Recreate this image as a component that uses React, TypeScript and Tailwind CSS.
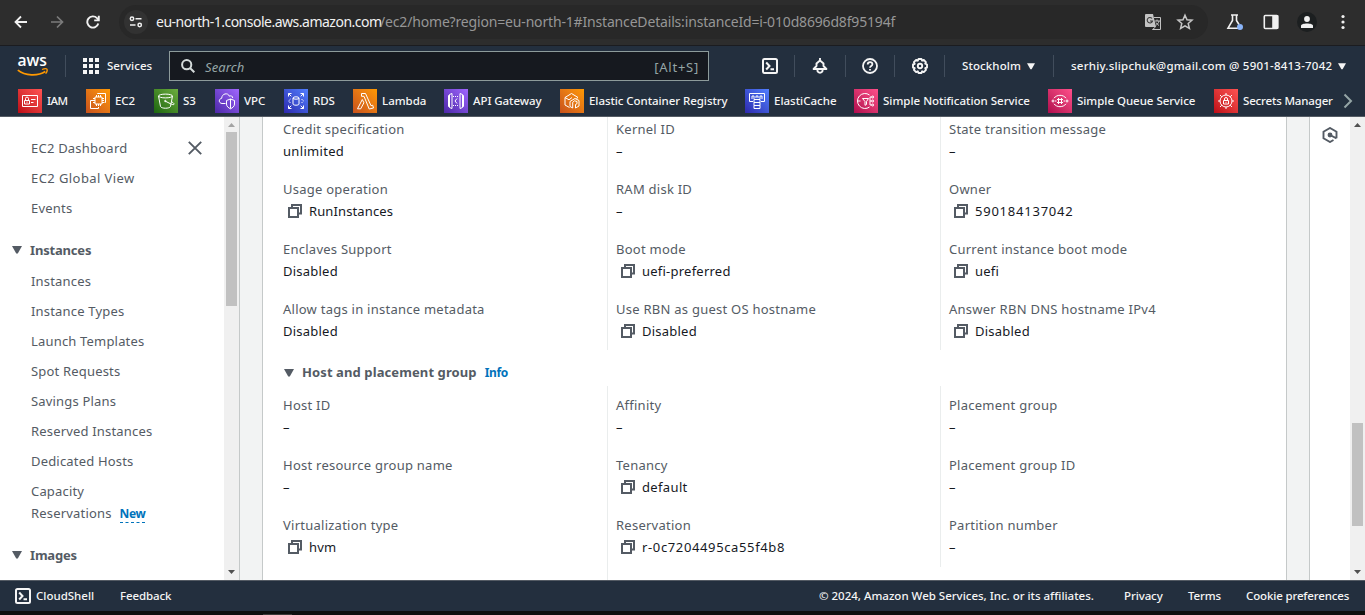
import React from "react";

type IconProps = { children: React.ReactNode; className?: string };

function Glyph({ children, className = "" }: IconProps) {
  return (
    <svg viewBox="0 0 24 24" className={`size-6 shrink-0 text-white ${className}`} fill="none" stroke="currentColor" strokeWidth="1">
      {children}
    </svg>
  );
}

const RED = "bg-linear-to-tr from-[#bd0816] to-[#ff5252]";
const ORANGE = "bg-linear-to-tr from-[#c8511b] to-[#ff9900]";
const GREEN = "bg-linear-to-tr from-[#1b660f] to-[#6cae3e]";
const PURPLE = "bg-linear-to-tr from-[#4d27a8] to-[#a166ff]";
const BLUE = "bg-linear-to-tr from-[#2e27ad] to-[#527fff]";
const PINK = "bg-linear-to-tr from-[#b0084d] to-[#ff4f8b]";

const favorites: { name: string; width: string; tint: string; track: string; art: React.ReactNode }[] = [
  {
    name: "IAM", width: "w-[68px]", tint: RED, track: "tracking-[-0.5px]",
    art: (
      <>
        <path d="M4.500 6.500h15v11h-15z" />
        <path d="M6.500 11.500h5v3.500h-5zM7.500 11.500V9.600a1.500 1.500 0 0 1 3 0v1.900M13 10.500h4.500M13 13.500h2.500" />
        <path d="M9 12.500v1.200" />
      </>
    ),
  },
  {
    name: "EC2", width: "w-[68px]", tint: ORANGE, track: "tracking-[-0.05px]",
    art: (
      <>
        <path d="M9 8h7v7H9z" />
        <path d="M10.500 8V6M12.500 8V6M14.500 8V6M10.500 17v-2M12.500 17v-2M14.500 17v-2M9 9.500H7M9 11.500H7M9 13.500H7M18 9.500h-2M18 11.500h-2M18 13.500h-2" />
        <path d="M11.500 5V4.500h8v9h-1M7 11.500H4.500v8h8V18" />
      </>
    ),
  },
  {
    name: "S3", width: "w-[61px]", tint: GREEN, track: "tracking-normal",
    art: (
      <>
        <ellipse cx="11.500" cy="7" rx="7" ry="1.900" />
        <path d="M4.500 7l2 10.500c1 2.300 9 2.300 10 0l2-10.500M11 12l6 3c1.500.700 3.500 1 3-.3-.4-.9-1.600-1.500-2.500-2" />
        <circle cx="11.300" cy="12" r=".7" />
      </>
    ),
  },
  {
    name: "VPC", width: "w-[69px]", tint: PURPLE, track: "tracking-normal",
    art: (
      <>
        <path d="M10.500 14.500H7c-3.600-.4-3.500-4.700-.3-5.200C6.700 4.500 13 3.200 14.400 7.200c1.800-.8 3.200-.2 3.300 1.800" />
        <path d="M15.500 10l4 1.500v3.500c0 2.500-2 3.800-4 4.800-2-1-4-2.300-4-4.800v-3.500zM15.500 10v9.500" />
      </>
    ),
  },
  {
    name: "RDS", width: "w-[69px]", tint: BLUE, track: "tracking-[-0.1px]",
    art: (
      <>
        <ellipse cx="12" cy="9" rx="3" ry="1.200" />
        <path d="M9 9v6c0 1.600 6 1.600 6 0V9" />
        <path d="M4.500 7.500v-3h3M4.500 4.500L7.300 7.300M16.500 4.500h3v3M19.500 4.500l-2.800 2.800M4.500 16.500v3h3M4.500 19.500l2.800-2.800M16.500 19.500h3v-3M19.500 19.500l-2.800-2.800" />
        <path d="M6.500 10l-2 2 2 2M17.500 10l2 2-2 2" strokeDasharray="1.500 .7" />
      </>
    ),
  },
  {
    name: "Lambda", width: "w-[91px]", tint: ORANGE, track: "tracking-normal",
    art: <path d="M8.500 4.500h4l5.500 12.200 1.700-.5.800 2.800-4.300 1L11 7.300H8.500zM9.300 10.500l1.600 3.300-3.200 6H4.500z" />,
  },
  {
    name: "API Gateway", width: "w-[116px]", tint: PURPLE, track: "tracking-[-0.08px]",
    art: (
      <>
        <path d="M8 4.500v15l-2.500-1V5.500zM16 4.500v15l2.500-1V5.500zM5.500 6.500h-1v11h1M18.500 6.500h1v11h-1" />
        <path d="M13 9.500L11 12l2 2.500" />
        <path d="M9 7.500h6M9 16.500h6" strokeDasharray="1 1" />
      </>
    ),
  },
  {
    name: "Elastic Container Registry", width: "w-[185px]", tint: ORANGE, track: "tracking-[-0.06px]",
    art: (
      <>
        <path d="M9.500 18.500L5 16V8.500l6.500-4 6.500 4-1.500 1" />
        <path d="M5 8.500l4 2.300 3-2.300" />
        <path d="M10 12.500l5-3 4 2v5.500l-3.500 2v-3.500l1.500-.8v-2.200l-2.500-.7-1.800 1.500V19l-2.700-1.500z" />
      </>
    ),
  },
  {
    name: "ElastiCache", width: "w-[109px]", tint: BLUE, track: "tracking-normal",
    art: (
      <>
        <path d="M8 12.500H4.500v-8h15v8H16M7 10V7h2v3M11 9V7h2v2M15 10V7h2v3" />
        <path d="M9 10.500h6v3H9zM9 13.500h6v3H9zM9 16.500h6v3H9z" />
      </>
    ),
  },
  {
    name: "Simple Notification Service", width: "w-[194px]", tint: PINK, track: "tracking-normal",
    art: (
      <>
        <path d="M15.500 6a7.500 7.500 0 1 0 0 12M4 12h2.500M8.500 9.500h6L12.500 12.500v3l-1.500.800v-3.800z" />
        <path d="M16 12h2M16 8v8M16 8h2M16 16h2" />
        <circle cx="18.700" cy="8" r="1" /><circle cx="18.700" cy="12" r="1" /><circle cx="18.700" cy="16" r="1" />
      </>
    ),
  },
  {
    name: "Simple Queue Service", width: "w-[166px]", tint: PINK, track: "tracking-[-0.03px]",
    art: (
      <>
        <path d="M6 9.200a7 6 0 0 1 12 0M6 14.800a7 6 0 0 0 12 0" />
        <path d="M10.500 9v6M13.500 9v6M9 10.500h6M9 13.500h6" />
        <circle cx="5" cy="12" r="1" /><circle cx="19" cy="12" r="1" />
        <path d="M7 12h1.500M15.500 12H17" />
      </>
    ),
  },
  {
    name: "Secrets Manager", width: "w-[126px]", tint: RED, track: "tracking-[-0.17px]",
    art: (
      <>
        <circle cx="12" cy="12" r="6" />
        <path d="M9.500 11.500h5v3.500h-5zM10.500 11.500V10a1.500 1.500 0 0 1 3 0v1.500M12 12.800v1" />
        <path d="M12 6V4M12 20v-2M6 12H4M20 12h-2M7.800 7.800L6 6M16.200 7.800L18 6M7.800 16.200L6 18M16.200 16.200L18 18" />
      </>
    ),
  },
];

function Caret({ className = "" }: { className?: string }) {
  return (
    <svg viewBox="0 0 10 8" className={`shrink-0 ${className}`} fill="currentColor">
      <path d="M0 0h10L5.800 7.500H4.200z" />
    </svg>
  );
}

function ShellIcon() {
  return (
    <svg viewBox="0 0 16 16" className="size-4 shrink-0" fill="none" stroke="currentColor" strokeWidth="2">
      <rect x="1" y="1" width="14" height="14" rx="1.500" />
      <path d="M4.200 4.500L7.500 8l-3.300 3.500M8.500 11.200h3.500" />
    </svg>
  );
}

function CopyIcon() {
  return (
    <svg viewBox="0 0 16 16" className="size-4 shrink-0 text-[#545b64]" fill="none" stroke="currentColor" strokeWidth="2">
      <path d="M2 5h9v9H2z" />
      <path d="M5 5V2h9v8.500h-3" />
    </svg>
  );
}

function ScrollArrow({ up = false, className = "" }: { up?: boolean; className?: string }) {
  return (
    <svg viewBox="0 0 7 4" className={`h-1 w-[7px] ${className}`} fill="currentColor">
      <path d={up ? "M3.500 0L7 4H0z" : "M0 0h7L3.500 4z"} />
    </svg>
  );
}

function BrowserBar() {
  return (
    <header className="flex h-[46px] shrink-0 items-center border-b border-[#1b1c20] bg-[#2d2d2d] pb-px text-[#f1f1f1]">
      <svg viewBox="0 0 14 14" className="ml-[14px] size-[14px]" fill="none" stroke="currentColor" strokeWidth="1.800">
        <path d="M13 7H2M7 1.500L1.500 7 7 12.500" />
      </svg>
      <svg viewBox="0 0 14 14" className="ml-[22px] size-[14px] text-[#7b7b7b]" fill="none" stroke="currentColor" strokeWidth="1.700">
        <path d="M1 7h11M7 1.500L12.500 7 7 12.500" />
      </svg>
      <svg viewBox="0 0 14 14" className="ml-[22px] size-[14px]" fill="none" stroke="currentColor" strokeWidth="1.900">
        <path d="M12.300 8.500A5.600 5.600 0 1 1 11 3.200l1.500 1.600" />
        <path d="M12.800.8v4.600H8.200" />
      </svg>
      <div className="ml-[19px] flex h-[34px] w-[1089px] items-center rounded-full bg-[#282828] pl-[5px]">
        <span className="flex size-6 items-center justify-center rounded-full bg-[#323232]">
          <svg viewBox="0 0 14 12" className="h-3 w-[14px]" fill="none" stroke="currentColor" strokeWidth="1.500">
            <circle cx="3" cy="2.800" r="1.700" /><path d="M6.500 2.800H12.500M1 9h5.500" /><circle cx="10.700" cy="9" r="1.700" />
          </svg>
        </span>
        <span className="ml-2 w-[224px] whitespace-nowrap text-[14px] leading-5 tracking-[-0.5px]">eu-north-1.console.aws.amazon.com</span>
        <span className="whitespace-nowrap text-[14px] leading-5 tracking-[-0.17px] text-[#969696]">/ec2/home?region=eu-north-1#InstanceDetails:instanceId=i-010d8696d8f95194f</span>
        <svg viewBox="0 0 18 18" className="ml-auto size-[18px] shrink-0" fill="none">
          <path d="M2 1h7l3 13H2a1 1 0 0 1-1-1V2a1 1 0 0 1 1-1z" fill="#c3c3c3" />
          <path d="M10 4.500h6.500v12H8.500l3-2.500" stroke="#c3c3c3" />
          <path d="M8 5.500A2.700 2.700 0 1 0 8.500 8H6" stroke="#383838" strokeWidth="1.100" />
          <path d="M10.500 8H16M13 6.500V8M15 8c-.5 2.500-2 3.500-3.300 4.500M12 9.500c.6 1.300 2 2.400 3 3" stroke="#c3c3c3" />
        </svg>
        <svg viewBox="0 0 18 18" className="ml-[14px] mr-[14px] size-[18px] shrink-0 text-[#c7c7c7]" fill="none" stroke="currentColor" strokeWidth="1.500">
          <path d="M9 2.200l2 4.600 5 .4-3.800 3.300 1.200 4.900L9 12.800l-4.400 2.600 1.200-4.900L2 7.200l5-.4z" />
        </svg>
      </div>
      <svg viewBox="0 0 18 18" className="ml-[18px] size-[18px]" fill="none" stroke="currentColor" strokeWidth="1.600">
        <path d="M5 2h7M6.500 2v5.500L2 15.200h10M10.500 2v5.500l2.500 4" />
        <circle cx="14" cy="14" r="3" fill="#8ab4f8" stroke="none" />
      </svg>
      <svg viewBox="0 0 16 16" className="ml-[19px] size-4" fill="none" stroke="currentColor" strokeWidth="1.600">
        <rect x="1.300" y="1.500" width="13.400" height="13" rx="1" /><path d="M10 2h4.500v12H10z" fill="currentColor" />
      </svg>
      <span className="ml-[18px] flex size-5 items-center justify-center rounded-full bg-[#1c1f20]">
        <svg viewBox="0 0 12 12" className="size-3" fill="currentColor"><circle cx="6" cy="3" r="2.900" /><path d="M0 12V9.800C0 6.700 12 6.700 12 9.800V12z" /></svg>
      </span>
      <svg viewBox="0 0 4 16" className="ml-6 h-4 w-1" fill="currentColor"><circle cx="2" cy="2.500" r="1.600" /><circle cx="2" cy="8" r="1.600" /><circle cx="2" cy="13.500" r="1.600" /></svg>
    </header>
  );
}

function Divider({ className = "" }: { className?: string }) {
  return <i className={`h-[22px] w-px shrink-0 bg-[#414d5c] ${className}`} />;
}

function TopNav() {
  return (
    <div className="flex h-10 shrink-0 items-center text-[11.500px] font-medium text-[#f5f5f5]">
      <svg viewBox="0 -8 32 36" className="ml-[17px] h-9 w-8 shrink-0">
        <text x=".5" y="10" textLength="29.500" lengthAdjust="spacingAndGlyphs" fill="#fff" fontSize="15.500" fontWeight="600" fontFamily="Open Sans, sans-serif">aws</text>
        <path d="M.8 14.200C8 20 21 20.300 28.300 15.500" fill="none" stroke="#f90" strokeWidth="1.700" />
        <path d="M25 13.500c2-.8 4.500-.9 5-.3.400.7-.1 2.800-1.400 4.500" fill="none" stroke="#f90" strokeWidth="1.300" />
      </svg>
      <Divider className="ml-4" />
      <svg viewBox="0 0 16 16" className="ml-[17px] size-4 shrink-0" fill="currentColor">
        {[0, 6, 12].map((y) => [0, 6, 12].map((x) => <rect key={`${x}-${y}`} x={x} y={y} width="4" height="4" />))}
      </svg>
      <span className="ml-2 w-[62px] tracking-[0.05px]">Services</span>
      <div className="flex h-[30px] w-[540px] shrink-0 items-center border border-[#8d9b9b] bg-[#16191f] pl-[11px] pr-[9px] font-normal text-[#95a5a6]">
        <svg viewBox="0 0 14 14" className="size-[14px]" fill="none" stroke="#d5dbdb" strokeWidth="2">
          <circle cx="5.700" cy="5.700" r="4.600" /><path d="M9 9l4.300 4.300" />
        </svg>
        <span className="ml-[10px] pt-[3px] text-[13px] italic tracking-[0.1px]">Search</span>
        <span className="ml-auto pt-[3px] text-[13px] tracking-[0.75px]">[Alt+S]</span>
      </div>
      <span className="ml-[53px]"><ShellIcon /></span>
      <Divider className="ml-4" />
      <svg viewBox="0 0 16 16" className="ml-[17px] size-4 shrink-0" fill="none" stroke="currentColor" strokeWidth="1.900">
        <path d="M8 0V2M8 2.500L4.500 5.500V8L1.600 11h12.800L11.500 8V5.500zM5.500 12v1.200c.8 2 4.200 2 5 0V12" strokeLinejoin="round" />
      </svg>
      <Divider className="ml-[17px]" />
      <svg viewBox="0 0 16 16" className="ml-4 size-4 shrink-0" fill="none" stroke="currentColor" strokeWidth="1.800">
        <circle cx="8" cy="8" r="7" /><path d="M5.700 6.500c0-3.300 4.700-3 4.700-.3C10.400 8 8 7.900 8 9.800M8 11v1.500" />
      </svg>
      <Divider className="ml-4" />
      <svg viewBox="0 0 16 16" className="ml-[17px] size-4 shrink-0" fill="none" stroke="currentColor" strokeWidth="1.900" strokeLinejoin="round">
        <path d="M6.500 1h3l.6 1.600 1.700-.7 2.100 2.200-.7 1.600 1.800.8v3l-1.800.7.8 1.700-2.200 2.200-1.700-.8L9.500 15h-3l-.7-1.700-1.700.8-2.200-2.200.8-1.700L1 9.500v-3l1.700-.7-.8-1.700 2.200-2.200 1.700.8z" />
        <circle cx="8" cy="8" r="2.200" />
      </svg>
      <Divider className="ml-4" />
      <span className="ml-[17px] w-[65px] tracking-[0.1px]">Stockholm</span>
      <Caret className="h-[7px] w-2" />
      <Divider className="ml-[18px]" />
      <span className="ml-[17px] w-[267px] whitespace-nowrap tracking-[0.22px]">serhiy.slipchuk@gmail.com @ 5901-8413-7042</span>
      <Caret className="h-[7px] w-2" />
    </div>
  );
}

function Favorites() {
  return (
    <div className="flex h-[31px] shrink-0 items-center border-b border-[#545b64] pl-[18px] text-[11.500px] font-medium text-[#f5f5f5]">
      {favorites.map((f) => (
        <span key={f.name} className={`flex shrink-0 items-center gap-[5px] whitespace-nowrap ${f.width}`}>
          <Glyph className={f.tint}>{f.art}</Glyph>
          <span className={f.track}>{f.name}</span>
        </span>
      ))}
      <svg viewBox="0 0 10 16" className="ml-[3px] h-4 w-[10px] shrink-0 text-[#95a5a6]" fill="none" stroke="currentColor" strokeWidth="2"><path d="M1.500 1.500L8 8l-6.500 6.500" /></svg>
    </div>
  );
}

function NavHeading({ children }: { children: React.ReactNode }) {
  return (
    <div className="flex h-[22px] items-center pl-3 text-[13px] font-bold tracking-[-0.18px]">
      <Caret className="mr-2 h-2 w-[10px]" />{children}
    </div>
  );
}

const instanceLinks = ["Instances", "Instance Types", "Launch Templates", "Spot Requests", "Savings Plans", "Reserved Instances", "Dedicated Hosts"];

function Sidebar() {
  return (
    <aside className="flex w-[240px] shrink-0 border-r border-[#c5c9c9] bg-white text-[13px] leading-[22px] text-[#545b64]">
      <nav className="flex w-[224px] flex-col pt-5">
        <div className="flex flex-col gap-2 pl-[31px]">
          <div className="flex items-center justify-between pr-[22px]">
            <span className="tracking-[0.22px]">EC2 Dashboard</span>
            <svg viewBox="0 0 14 14" className="size-[14px]" fill="none" stroke="currentColor" strokeWidth="1.900"><path d="M.8.8l12.400 12.400M13.200.8L.8 13.200" /></svg>
          </div>
          <span className="tracking-[0.42px]">EC2 Global View</span>
          <span className="tracking-[0.2px]">Events</span>
        </div>
        <div className="mt-5"><NavHeading>Instances</NavHeading></div>
        <div className="mt-[9px] flex flex-col gap-2 pl-[31px] tracking-[0.18px]">
          {instanceLinks.map((l) => <span key={l}>{l}</span>)}
          <span>Capacity<br />Reservations<span className="ml-2 inline-block border-b border-dashed border-[#0073bb] text-[12px] leading-4 font-bold tracking-[-0.4px] text-[#0073bb]">New</span></span>
        </div>
        <div className="mt-5"><NavHeading>Images</NavHeading></div>
      </nav>
      <div className="flex w-[15px] flex-col items-center bg-[#f0f0f0] pt-[6px]">
        <ScrollArrow up className="text-[#a3a3a3]" />
        <div className="mt-[5px] h-[174px] w-[11px] bg-[#c1c1c1]" />
        <ScrollArrow className="mt-auto mb-[6px] text-[#505050]" />
      </div>
    </aside>
  );
}

type Field = { label: string; value: string; copy?: boolean; track?: string };

function FieldCell({ label, value, copy, track = "tracking-[0.23px]" }: Field) {
  return (
    <div className="h-11 leading-[22px]">
      <div className="tracking-[0.25px] text-[#545b64]">{label}</div>
      <div className={`flex items-center text-[#16191f] ${copy ? "pl-1" : ""}`}>
        {copy && <span className="mr-[6px]"><CopyIcon /></span>}
        <span className={track}>{value}</span>
      </div>
    </div>
  );
}

const details: Field[][] = [
  [
    { label: "Credit specification", value: "unlimited", track: "tracking-[0.32px]" },
    { label: "Usage operation", value: "RunInstances", copy: true, track: "tracking-[0.12px]" },
    { label: "Enclaves Support", value: "Disabled" },
    { label: "Allow tags in instance metadata", value: "Disabled" },
  ],
  [
    { label: "Kernel ID", value: "–" },
    { label: "RAM disk ID", value: "–" },
    { label: "Boot mode", value: "uefi-preferred", copy: true },
    { label: "Use RBN as guest OS hostname", value: "Disabled", copy: true },
  ],
  [
    { label: "State transition message", value: "–" },
    { label: "Owner", value: "590184137042", copy: true, track: "tracking-[0.77px]" },
    { label: "Current instance boot mode", value: "uefi", copy: true },
    { label: "Answer RBN DNS hostname IPv4", value: "Disabled", copy: true },
  ],
];

const placement: Field[][] = [
  [
    { label: "Host ID", value: "–" },
    { label: "Host resource group name", value: "–" },
    { label: "Virtualization type", value: "hvm", copy: true },
  ],
  [
    { label: "Affinity", value: "–" },
    { label: "Tenancy", value: "default", copy: true, track: "tracking-[0.35px]" },
    { label: "Reservation", value: "r-0c7204495ca55f4b8", copy: true, track: "tracking-[0.63px]" },
  ],
  [
    { label: "Placement group", value: "–" },
    { label: "Placement group ID", value: "–" },
    { label: "Partition number", value: "–" },
  ],
];

function Columns({ data, first, rest }: { data: Field[][]; first: string; rest: string }) {
  return (
    <div className="grid grid-cols-[324px_333px_1fr] items-start">
      {data.map((col, i) => (
        <div key={i} className={`flex flex-col gap-4 ${i === 0 ? "" : "border-l border-[#eaeded] pl-2"} ${i === 1 ? first : rest}`}>
          {col.map((f) => <FieldCell key={f.label} {...f} />)}
        </div>
      ))}
    </div>
  );
}

function DetailCard() {
  return (
    <section className="w-[1025px] shrink-0 overflow-hidden border-x border-[#c5c9c9] bg-white pl-5 text-[13px]">
      <Columns data={details} first="h-[233px] pt-px" rest="h-[233px] pt-px" />
      <div className="flex h-9 items-center pt-[9px]">
        <Caret className="ml-px mr-2 h-2 w-[10px] text-[#545b64]" />
        <h3 className="text-[13px] font-bold tracking-[0.1px] text-[#545b64]">Host and placement group</h3>
        <a className="ml-2 pt-px text-[12px] font-bold tracking-[-0.35px] text-[#0073bb]">Info</a>
      </div>
      <Columns data={placement} first="h-[194px] pt-2" rest="h-[181px] pt-2" />
    </section>
  );
}

function Footer() {
  return (
    <footer className="flex h-[31px] shrink-0 items-center border-t border-[#545b64] bg-[#232f3e] pl-[15px] text-[11.500px] font-medium text-[#f5f5f5]">
      <ShellIcon />
      <span className="ml-[5px] w-[84px]">CloudShell</span>
      <span className="tracking-[-0.1px]">Feedback</span>
      <span className="ml-auto w-[305px] whitespace-nowrap tracking-[-0.01px]">© 2024, Amazon Web Services, Inc. or its affiliates.</span>
      <span className="w-16 tracking-[-0.1px]">Privacy</span>
      <span className="w-[58px] tracking-[-0.1px]">Terms</span>
      <span className="w-[119px] tracking-[-0.15px]">Cookie preferences</span>
    </footer>
  );
}

export default function App() {
  return (
    <div className="flex h-[615px] w-[1365px] flex-col overflow-hidden bg-[#0d0f0e] font-['Noto_Sans','Open_Sans',sans-serif]">
      <BrowserBar />
      <div className="flex shrink-0 flex-col bg-[#232f3e]">
        <TopNav />
        <Favorites />
      </div>
      <main className="flex h-[463px] shrink-0 bg-[#f2f3f3]">
        <Sidebar />
        <div className="w-[22px] shrink-0" />
        <DetailCard />
        <div className="w-[22px] shrink-0" />
        <div className="flex flex-1 justify-center border-l border-[#c5c9c9] bg-white pt-[10px]">
          <svg viewBox="0 0 16 16" className="size-4 text-[#545b64]" fill="none" stroke="currentColor" strokeWidth="1.900">
            <path d="M11.500 13L8 15 1.500 11.300V4.700L8 1l6.500 3.700v6.500M8 8l6.500 3.300" />
            <circle cx="8" cy="8" r="1.500" fill="currentColor" />
          </svg>
        </div>
        <div className="flex w-[15px] shrink-0 flex-col items-center bg-[#f0f0f0] pt-[6px]">
          <ScrollArrow up className="text-[#505050]" />
          <div className="mt-[296px] h-[103px] w-[11px] bg-[#c1c1c1]" />
          <ScrollArrow className="mt-auto mb-[6px] text-[#505050]" />
        </div>
      </main>
      <Footer />
      <div className="flex h-1 items-end pl-[263px]"><i className="h-px w-[29px] bg-[#3a3a38]" /></div>
    </div>
  );
}
